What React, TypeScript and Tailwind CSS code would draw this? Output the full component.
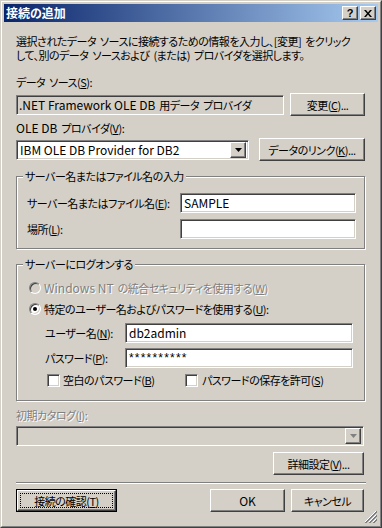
import React from "react";

const raised =
  "bg-[#d4d0c8] border border-t-white border-l-white border-r-[#404040] border-b-[#404040] shadow-[inset_-1px_-1px_0_#808080]";
const sunken =
  "border border-t-[#808080] border-l-[#808080] border-r-white border-b-white shadow-[inset_1px_1px_0_#404040,inset_-1px_-1px_0_#d4d0c8]";
const disabledText = "text-[#808080] [text-shadow:1px_1px_0_#ffffff]";

function Btn({ children, className = "" }: { children: React.ReactNode; className?: string }) {
  return <div className={`${raised} flex items-center justify-center whitespace-nowrap ${className}`}>{children}</div>;
}

function Field({ children, className = "" }: { children?: React.ReactNode; className?: string }) {
  return (
    <div className={`${sunken} bg-white h-[20px] flex items-center pl-[3px] whitespace-nowrap overflow-hidden ${className}`}>
      {children}
    </div>
  );
}

function L({ children }: { children: React.ReactNode }) {
  return <span className="text-[12px] tracking-normal">{children}</span>;
}

function S() {
  return <span className="inline-block w-[4px]" />;
}

function Arrow({ color = "#000000" }: { color?: string }) {
  return (
    <svg width="7" height="4" viewBox="0 0 7 4">
      <path d="M0 0h7L3.5 4z" fill={color} />
    </svg>
  );
}

function Radio({ checked, disabled }: { checked?: boolean; disabled?: boolean }) {
  return (
    <div
      className={`w-[12px] h-[12px] shrink-0 rounded-full border border-t-[#808080] border-l-[#808080] border-r-white border-b-white shadow-[inset_1px_1px_0_#404040,inset_-1px_-1px_0_#d4d0c8] flex items-center justify-center ${
        disabled ? "bg-[#d4d0c8]" : "bg-white"
      }`}
    >
      {checked && <div className="w-[4px] h-[4px] rounded-full bg-black" />}
    </div>
  );
}

function Check() {
  return <div className={`${sunken} w-[13px] h-[13px] shrink-0 bg-white`} />;
}

function M({ c }: { c: string }) {
  return <span className="underline underline-offset-[1px] decoration-1">{c}</span>;
}

export default function App() {
  return (
    <div className="relative w-[382px] h-[528px] bg-[#d4d0c8] border border-t-[#d4d0c8] border-l-[#d4d0c8] border-r-[#404040] border-b-[#404040] text-[11px] tracking-[-0.5px] leading-[14px] text-black font-['Noto_Sans_CJK_JP','Noto_Sans',sans-serif] [font-feature-settings:'palt']">
      <div className="h-full border border-t-white border-l-white border-r-[#808080] border-b-[#808080] p-[2px] flex flex-col">
        {/* Title bar */}
        <div className="h-[18px] shrink-0 flex items-center bg-[linear-gradient(to_right,#0a246a,#a6caf0)] pl-[2px] pr-[2px]">
          <span className="text-white font-bold text-[12px] tracking-normal leading-[14px]">接続の追加</span>
          <div className="ml-auto flex gap-[2px]">
            <div className={`${raised} w-[16px] h-[14px] flex items-center justify-center font-bold text-[11px] tracking-normal leading-none font-['Liberation_Sans',sans-serif]`}>
              ?
            </div>
            <div className={`${raised} w-[16px] h-[14px] flex items-center justify-center`}>
              <svg width="8" height="7" viewBox="0 0 8 7">
                <path d="M0 0h2l2 2.4L6 0h2L5 3.5 8 7H6L4 4.6 2 7H0l3-3.5z" fill="#000" />
              </svg>
            </div>
          </div>
        </div>

        {/* Body */}
        <div className="flex-1 flex flex-col pl-[12px] pr-[13px]">
          <p className="mt-[12px] leading-[14px] whitespace-nowrap">
            選択されたデータ<S />ソースに接続するための情報を入力し、[変更]<S />をクリック
            <br />
            して、別のデータ<S />ソースおよび<S />(または)<S />プロバイダを選択します。
          </p>

          <div className="mt-[13px] h-[14px] whitespace-nowrap">
            データ<S />ソース(<M c="S" />):
          </div>
          <div className="mt-[4px] h-[23px] flex items-center">
            <div className={`${sunken} bg-[#d4d0c8] w-[268px] h-[20px] flex items-center pl-[2px] whitespace-nowrap`}>
              <L>.NET Framework OLE DB</L>
              <S />
              用データ<S />プロバイダ
            </div>
            <Btn className="ml-auto w-[75px] h-[23px]">
              変更(<M c="C" />)...
            </Btn>
          </div>

          <div className="mt-[5px] h-[14px] whitespace-nowrap">
            <L>OLE DB</L>
            <S />
            プロバイダ(<M c="V" />):
          </div>
          <div className="mt-[3px] h-[23px] flex items-center">
            <div className={`${sunken} bg-white w-[233px] h-[20px] flex items-center pl-[3px] pr-[2px]`}>
              <span className="whitespace-nowrap">
                <L>IBM OLE DB Provider for DB2</L>
              </span>
              <div className={`${raised} ml-auto w-[16px] h-[16px] flex items-center justify-center`}>
                <Arrow />
              </div>
            </div>
            <Btn className="ml-auto w-[106px] h-[23px]">
              データのリンク(<M c="K" />)...
            </Btn>
          </div>

          {/* Group 1 */}
          <fieldset className="mt-[8px] border border-[#808080] shadow-[inset_1px_1px_0_#ffffff,1px_1px_0_#ffffff]">
            <legend className="ml-[6px] px-[2px] h-[14px] leading-[14px] bg-[#d4d0c8] whitespace-nowrap">サーバー名またはファイル名の入力</legend>
            <div className="pt-[10px] pb-[9px] pl-[10px] pr-[8px] flex flex-col gap-[6px]">
              <div className="h-[20px] flex items-center">
                <span className="whitespace-nowrap">
                  サーバー名またはファイル名(<M c="E" />):
                </span>
                <Field className="ml-auto w-[176px]">
                  <L>SAMPLE</L>
                </Field>
              </div>
              <div className="h-[20px] flex items-center">
                <span className="whitespace-nowrap">
                  場所(<M c="L" />):
                </span>
                <Field className="ml-auto w-[176px]" />
              </div>
            </div>
          </fieldset>

          {/* Group 2 */}
          <fieldset className="mt-[8px] border border-[#808080] shadow-[inset_1px_1px_0_#ffffff,1px_1px_0_#ffffff]">
            <legend className="ml-[6px] px-[2px] h-[14px] leading-[14px] bg-[#d4d0c8] whitespace-nowrap">サーバーにログオンする</legend>
            <div className="pt-[9px] pb-[12px] pl-[12px] flex flex-col">
              <div className="h-[16px] flex items-center gap-[3px]">
                <Radio disabled />
                <span className={`${disabledText} whitespace-nowrap`}>
                  <L>Windows NT</L>
                  <S />
                  の統合セキュリティを使用する(<M c="W" />)
                </span>
              </div>
              <div className="mt-[5px] h-[16px] flex items-center gap-[3px]">
                <Radio checked />
                <span className="whitespace-nowrap">
                  特定のユーザー名およびパスワードを使用する(<M c="U" />):
                </span>
              </div>
              <div className="mt-[6px] h-[20px] flex items-center pl-[16px]">
                <span className="w-[80px] whitespace-nowrap">
                  ユーザー名(<M c="N" />):
                </span>
                <Field className="w-[228px]">
                  <L>db2admin</L>
                </Field>
              </div>
              <div className="mt-[5px] h-[20px] flex items-center pl-[16px]">
                <span className="w-[80px] whitespace-nowrap">
                  パスワード(<M c="P" />):
                </span>
                <Field className="w-[228px]">
                  <span className="font-['Liberation_Sans',sans-serif] text-[12px] tracking-[1.2px]">**********</span>
                </Field>
              </div>
              <div className="mt-[4px] h-[16px] flex items-center pl-[18px]">
                <div className="w-[138px] flex items-center gap-[3px]">
                  <Check />
                  <span className="whitespace-nowrap">
                    空白のパスワード(<M c="B" />)
                  </span>
                </div>
                <div className="flex items-center gap-[4px]">
                  <Check />
                  <span className="whitespace-nowrap">
                    パスワードの保存を許可(<M c="S" />)
                  </span>
                </div>
              </div>
            </div>
          </fieldset>

          <div className={`mt-[7px] h-[14px] whitespace-nowrap ${disabledText}`}>
            初期カタログ(<M c="I" />):
          </div>
          <div className={`${sunken} mt-[4px] h-[20px] mr-[1px] bg-[#d4d0c8] flex items-center pr-[2px]`}>
            <div className={`${raised} ml-auto w-[16px] h-[16px] flex items-center justify-center`}>
              <Arrow color="#808080" />
            </div>
          </div>

          <div className="mt-[6px] h-[23px] flex">
            <Btn className="ml-auto mr-[1px] w-[91px] h-[23px]">
              詳細設定(<M c="V" />)...
            </Btn>
          </div>

          <div className="mt-[7px] h-[2px] -mr-[1px] border-t border-t-[#808080] border-b border-b-white" />

          <div className="mt-[5px] h-[23px] flex items-center">
            <div className="w-[101px] h-[23px] border border-black">
              <div className={`${raised} h-full p-[2px]`}>
                <div className="h-full border border-dotted border-black flex items-center justify-center whitespace-nowrap">
                  接続の確認(<M c="T" />)
                </div>
              </div>
            </div>
            <Btn className="ml-auto w-[75px] h-[23px]">
              <L>OK</L>
            </Btn>
            <Btn className="ml-[6px] mr-[1px] w-[73px] h-[23px]">キャンセル</Btn>
          </div>
        </div>
      </div>

      {/* resize grip */}
      <svg className="absolute right-[4px] bottom-[4px]" width="12" height="12" viewBox="0 0 12 12">
        <path d="M11 0L0 11" stroke="#ffffff" />
        <path d="M12 0L0 12M12 1L1 12" stroke="#808080" />
        <path d="M11 4L4 11" stroke="#ffffff" />
        <path d="M12 4L4 12M12 5L5 12" stroke="#808080" />
        <path d="M11 8L8 11" stroke="#ffffff" />
        <path d="M12 8L8 12M12 9L9 12" stroke="#808080" />
      </svg>
    </div>
  );
}
